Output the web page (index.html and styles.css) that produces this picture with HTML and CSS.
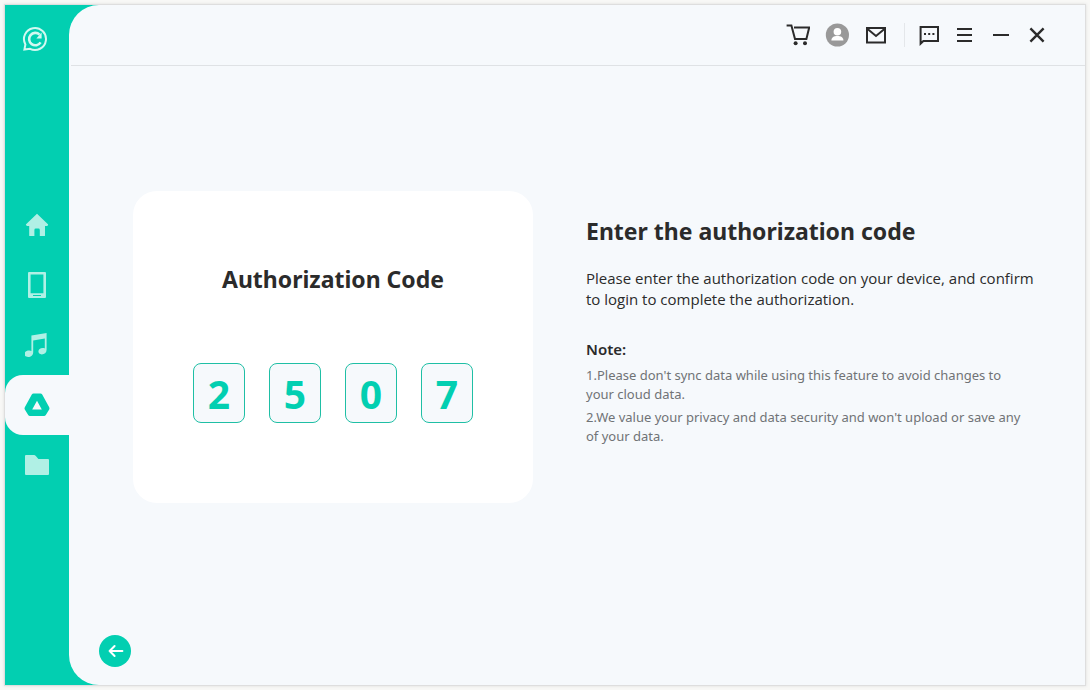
FILE: index.html
```html
<!DOCTYPE html>
<html lang="en">
<head>
<meta charset="utf-8">
<meta name="viewport" content="width=device-width, initial-scale=1">
<title>Authorization Code</title>
<link rel="stylesheet" href="styles.css">
</head>
<body>
<div class="window">
  <aside class="sidebar">
    <svg class="logo" width="26" height="26" viewBox="0 0 26 26" fill="none" stroke="currentColor" stroke-width="2">
      <path d="M3.4 18.4A11 11 0 1 1 8 22.8L2.4 23.6Z"/>
      <path d="M18.6 16.4A6.2 6.2 0 1 1 17.6 8.6" stroke-width="2.6"/>
      <path d="M19.6 6.6V12.4H14.4Z" fill="currentColor" stroke="none"/>
    </svg>
    <nav class="nav" aria-label="Main">
      <a class="nav-item" href="#home" aria-label="Home">
        <svg width="24" height="24" viewBox="0 0 24 24" fill="currentColor"><path d="M12 .8 23.2 11.4 22.4 13H20V22.4Q20 23 19.4 23H14.8V17Q14.8 15.6 13.4 15.6H10.8Q9.4 15.6 9.4 17V23H4.8Q4.2 23 4.2 22.4V13H1.8L.8 11.4Z"/></svg>
      </a>
      <a class="nav-item" href="#device" aria-label="Device">
        <svg width="24" height="28" viewBox="0 0 24 28" fill="currentColor"><path fill-rule="evenodd" d="M4 1H20Q21 1 21 2V26Q21 27 20 27H4Q3 27 3 26V2Q3 1 4 1ZM5.6 3.4V22.2H18.4V3.4ZM8 24V25H16V24Z"/></svg>
      </a>
      <a class="nav-item" href="#music" aria-label="Music">
        <svg width="24" height="26" viewBox="0 0 24 26" fill="currentColor"><path d="M6.4 3.6 21.6 1V17.8C21.6 20.8 19.4 22.4 16.8 22.4 14.6 22.4 13.4 21.2 13.4 19.6 13.4 17.2 15.6 15.8 18 16 18.8 16 19.4 16.2 19.8 16.4V6.4L8.2 8.6V20.2C8.2 23.2 6 25 3.2 25 1 25-.6 24-.6 22.2-.6 19.8 2 18.4 4.4 18.6 5.2 18.6 5.8 18.8 6.4 19Z"/></svg>
      </a>
      <a class="nav-item nav-item-active" href="#cloud" aria-label="Cloud drive" aria-current="page">
        <svg width="26" height="24" viewBox="0 0 26 24" fill="currentColor"><path fill-rule="evenodd" d="M9.6.6H16.4Q17.6.6 18.2 1.6L25.2 14.2Q25.8 15.4 25.2 16.4L21.8 22Q21.2 23 20 23H6Q4.8 23 4.2 22L.8 16.4Q.2 15.4.8 14.2L7.8 1.6Q8.4.6 9.6.6ZM13 7.8 8.2 16.4H17.8Z"/></svg>
      </a>
      <a class="nav-item" href="#files" aria-label="Files">
        <svg width="24" height="20" viewBox="0 0 24 20" fill="currentColor"><path d="M1 0H9Q10 0 10.8 1L13.4 4H23Q24 4 24 5V19Q24 20 23 20H1Q0 20 0 19V1Q0 0 1 0Z"/></svg>
      </a>
    </nav>
  </aside>
  <div class="panel">
    <header class="toolbar">
      <div class="tools">
        <button class="tool" type="button" aria-label="Cart">
          <svg width="24" height="24" viewBox="0 0 24 24" fill="none" stroke="currentColor" stroke-width="2"><path d="M.6 2.6H5.4L9 16H20.4L23.2 4.6H8"/><circle cx="9.6" cy="20.2" r="2" fill="currentColor" stroke="none"/><circle cx="19" cy="20.2" r="2" fill="currentColor" stroke="none"/></svg>
        </button>
        <button class="tool" type="button" aria-label="Account">
          <svg width="24" height="24" viewBox="0 0 24 24"><circle cx="12.4" cy="12" r="11.6" fill="#999"/><circle cx="12.4" cy="8.8" r="3.8" fill="#fff"/><path d="M6.4 17.4C6.4 14.4 8.8 13 12.4 13S18.4 14.4 18.4 17.4Z" fill="#fff"/></svg>
        </button>
        <button class="tool" type="button" aria-label="Mail">
          <svg width="24" height="24" viewBox="0 0 24 24" fill="none" stroke="currentColor" stroke-width="2"><path d="M3 5H21V19.4H3ZM3 5.6 12 13 21 5.6"/></svg>
        </button>
      </div>
      <div class="tools tools-window">
        <button class="tool" type="button" aria-label="Feedback">
          <svg width="24" height="24" viewBox="0 0 24 24" fill="none" stroke="currentColor" stroke-width="2"><path d="M3.6 4H21V18H6.4L3.6 20.6Z"/><path d="M7 11H9M11.2 11H13.2M15.4 11H17.4"/></svg>
        </button>
        <button class="tool" type="button" aria-label="Menu">
          <svg width="24" height="24" viewBox="0 0 24 24" stroke="currentColor" stroke-width="2"><path d="M4 6H19M4 12H19M4 18H19"/></svg>
        </button>
        <button class="tool" type="button" aria-label="Minimize">
          <svg width="24" height="24" viewBox="0 0 24 24" stroke="currentColor" stroke-width="2"><path d="M4 12H20"/></svg>
        </button>
        <button class="tool" type="button" aria-label="Close">
          <svg width="24" height="24" viewBox="0 0 24 24" stroke="currentColor" stroke-width="2.4"><path d="M5.4 5.4 18.6 18.6M18.6 5.4 5.4 18.6"/></svg>
        </button>
      </div>
    </header>
    <main class="content">
      <section class="card">
        <h2 class="title">Authorization Code</h2>
        <div class="code">
          <span class="digit">2</span>
          <span class="digit">5</span>
          <span class="digit">0</span>
          <span class="digit">7</span>
        </div>
      </section>
      <section class="info">
        <h1 class="title">Enter the authorization code</h1>
        <p class="lead">Please enter the authorization code on your device, and confirm to login to complete the authorization.</p>
        <h3 class="note-title">Note:</h3>
        <p class="note">1.Please don't sync data while using this feature to avoid changes to your cloud data.</p>
        <p class="note">2.We value your privacy and data security and won't upload or save any of your data.</p>
      </section>
    </main>
    <footer class="footer">
      <button class="back" type="button" aria-label="Back">
        <svg width="20" height="20" viewBox="0 0 20 20" fill="none" stroke="currentColor" stroke-width="2" stroke-linecap="round" stroke-linejoin="round"><path d="M17.4 10H4.6M9.6 5 4.6 10 9.6 15"/></svg>
      </button>
    </footer>
  </div>
</div>
</body>
</html>
```
FILE: styles.css
```css
* {
  box-sizing: border-box;
}

body {
  margin: 0;
  padding: 5px;
  min-height: 100vh;
  display: flex;
  background: #f8f8f6;
  color: #2b2b2b;
  font-family: "Noto Sans", "Open Sans", sans-serif;
}

h1, h2, h3, p {
  margin: 0;
}

svg {
  display: block;
}

.window {
  flex: 1;
  display: flex;
  background: #02cfb1;
  box-shadow: 0 0 0 1px #dedede, 0 0 3px 1px #dedede;
}

.sidebar {
  width: 64px;
  display: flex;
  flex-direction: column;
}

.logo {
  margin: 21px 17px 143px;
  color: #d3f8f1;
}

.nav-item {
  height: 60px;
  display: flex;
  align-items: center;
  justify-content: center;
  color: #b0f0e5;
}

.nav-item-active {
  border-radius: 18px 0 0 18px;
  background: #f6f9fc;
  color: #02cfb1;
}

.panel {
  flex: 1;
  display: flex;
  flex-direction: column;
  border-radius: 30px 0 0 30px;
  background: #f6f9fc;
}

.toolbar {
  height: 61px;
  display: flex;
  align-items: center;
  justify-content: flex-end;
  gap: 16px;
  margin-left: 2px;
  padding-right: 36px;
  border-bottom: 1px solid #dfe2e5;
}

.tools {
  display: flex;
  gap: 15px;
}

.tools-window {
  gap: 12px;
  padding-left: 12px;
  border-left: 1px solid #e4e7ea;
}

.tool {
  padding: 0;
  border: 0;
  background: none;
  color: #2b2b2b;
}

.content {
  flex: 1;
  display: flex;
  align-items: flex-start;
  gap: 53px;
  padding: 125px 40px 0 64px;
}

.card {
  width: 400px;
  display: flex;
  flex-direction: column;
  align-items: center;
  gap: 67px;
  padding: 72px 24px 80px;
  border-radius: 24px;
  background: #fff;
}

.title {
  font-size: 23px;
  line-height: 33px;
  font-weight: 700;
}

.code {
  display: flex;
  gap: 24px;
}

.digit {
  width: 52px;
  height: 60px;
  border: 1px solid #1fbfa5;
  border-radius: 8px;
  background: #f6f9fc;
  color: #02cfb1;
  font-size: 39px;
  line-height: 60px;
  font-weight: 700;
  text-align: center;
}

.info {
  flex: 1;
  padding-top: 24px;
}

.lead {
  margin: 20px 0 29px;
  font-family: "Open Sans", "Noto Sans", sans-serif;
  font-size: 15px;
  line-height: 21px;
}

.note-title {
  margin-bottom: 7px;
  font-size: 15px;
  line-height: 20px;
  font-weight: 600;
}

.note {
  margin-bottom: 4px;
  padding-right: 16px;
  font-size: 13px;
  line-height: 19px;
  color: #707376;
}

.footer {
  padding: 0 30px 18px;
}

.back {
  width: 32px;
  height: 32px;
  display: flex;
  align-items: center;
  justify-content: center;
  padding: 0;
  border: 0;
  border-radius: 50%;
  background: #02cfb1;
  color: #fff;
}
```
